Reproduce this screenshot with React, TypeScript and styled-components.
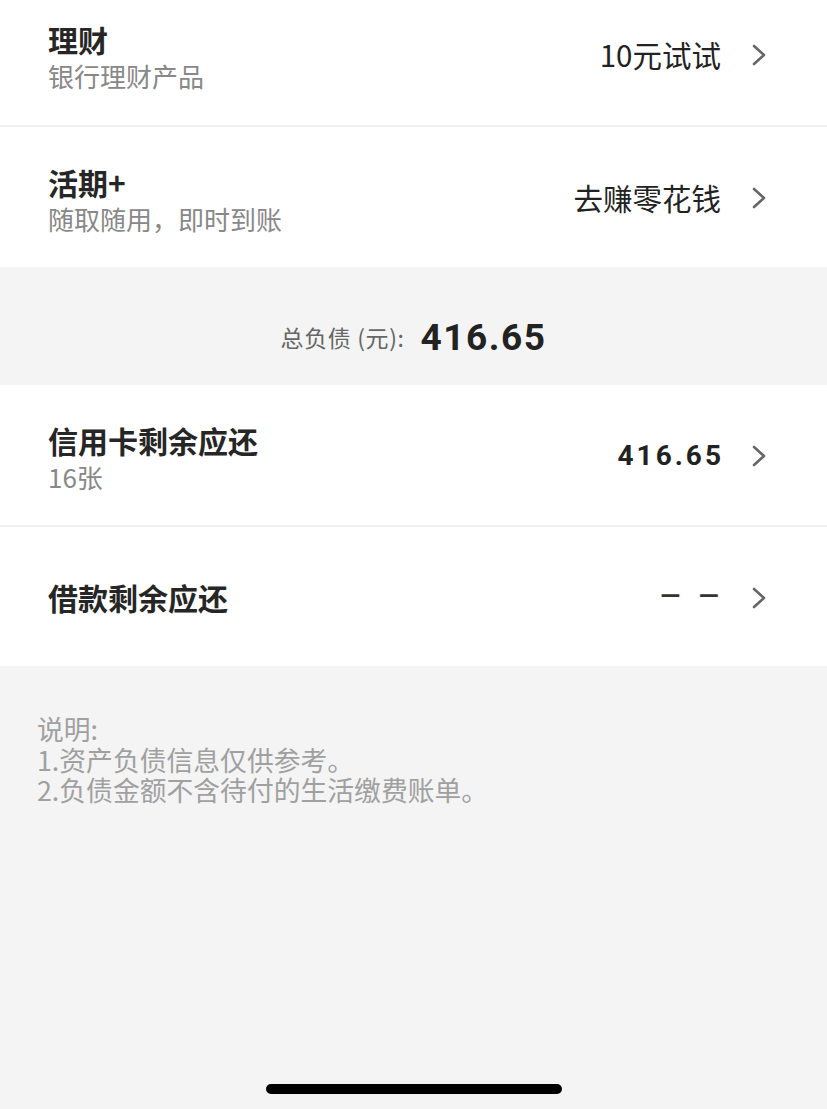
import React from "react";
import styled, { createGlobalStyle } from "styled-components";

const GlobalStyle = createGlobalStyle`
  html, body {
    margin: 0;
    padding: 0;
    background: #f4f4f4;
  }
  body {
    font-family: "Noto Sans CJK SC", "Noto Sans", sans-serif;
    color: #222;
  }
`;

type ValueKind = "text" | "number" | "dash";

interface IEntry {
  title: string;
  sub?: string;
  value: string;
  kind?: ValueKind;
}

const assets: IEntry[] = [
  { title: "理财", sub: "银行理财产品", value: "10元试试" },
  { title: "活期+", sub: "随取随用，即时到账", value: "去赚零花钱" },
];

const debts: IEntry[] = [
  { title: "信用卡剩余应还", sub: "16张", value: "416.65", kind: "number" },
  { title: "借款剩余应还", value: "– –", kind: "dash" },
];

const Chevron: React.FC = () => (
  <ChevronSvg viewBox="0 0 14 22" width="14" height="22">
    <path d="M2 2 L12 11 L2 20" fill="none" stroke="#666" strokeWidth="2.6" strokeLinecap="round" strokeLinejoin="round" />
  </ChevronSvg>
);

const EntryRow: React.FC<IEntry & { height?: number; lift?: number; divider?: boolean }> = ({
  title,
  sub,
  value,
  kind = "text",
  height = 140,
  lift = 0,
  divider,
}) => {
  return (
    <Row $height={height} $lift={lift} $divider={divider}>
      <TextBlock $stacked={!!sub}>
        <Title>{title}</Title>
        {sub && <Sub>{sub}</Sub>}
      </TextBlock>
      <Action>
        <Value $kind={kind}>{value}</Value>
        <Chevron />
      </Action>
    </Row>
  );
};

export default function App() {
  return (
    <Page>
      <GlobalStyle />
      <Card>
        <EntryRow {...assets[0]} height={127} lift={18} divider />
        <EntryRow {...assets[1]} />
      </Card>

      <Total>
        <TotalLabel>总负债 (元):</TotalLabel>
        <TotalAmount>416.65</TotalAmount>
      </Total>

      <Card>
        <EntryRow {...debts[0]} height={142} divider />
        <EntryRow {...debts[1]} height={139} />
      </Card>

      <Notes>
        <p>说明:</p>
        <p>1.资产负债信息仅供参考。</p>
        <p>2.负债金额不含待付的生活缴费账单。</p>
      </Notes>

      <HomeBar />
    </Page>
  );
}

const Page = styled.div`
  width: 827px;
  min-height: 1109px;
  display: flex;
  flex-direction: column;
  background: #f4f4f4;
`;

const Card = styled.section`
  background: #fff;
  display: flex;
  flex-direction: column;
`;

const Row = styled.div<{ $height: number; $lift: number; $divider?: boolean }>`
  height: ${(p) => p.$height}px;
  box-sizing: border-box;
  display: flex;
  align-items: center;
  justify-content: space-between;
  padding: 0 61px ${(p) => p.$lift}px 48px;
  border-bottom: ${(p) => (p.$divider ? "2px solid #f1f1f1" : "none")};
`;

const TextBlock = styled.div<{ $stacked: boolean }>`
  display: flex;
  flex-direction: column;
  margin-top: ${(p) => (p.$stacked ? "8px" : "0")};
`;

const Title = styled.div`
  font-size: 30px;
  line-height: 36px;
  font-weight: 700;
  color: #262626;
`;

const Sub = styled.div`
  font-size: 26px;
  line-height: 38px;
  color: #888;
`;

const Action = styled.div`
  display: flex;
  align-items: center;
  gap: 31px;
`;

const valueFont: Record<ValueKind, string> = {
  text: `
    font-size: 29.5px;
    font-weight: 400;
  `,
  number: `
    font-family: Roboto, "Noto Sans", sans-serif;
    font-size: 28px;
    font-weight: 700;
    letter-spacing: 3px;
    margin-right: -3px;
  `,
  dash: `
    font-family: Roboto, "Noto Sans", sans-serif;
    font-size: 36px;
    font-weight: 400;
    word-spacing: 6px;
    color: #333;
  `,
};

const Value = styled.span<{ $kind: ValueKind }>`
  color: #222;
  ${(p) => valueFont[p.$kind]}
`;

const ChevronSvg = styled.svg`
  display: block;
  margin-top: 2px;
`;

const Total = styled.div`
  height: 118px;
  display: flex;
  align-items: center;
  justify-content: center;
  gap: 16px;
  padding-top: 22px;
  box-sizing: border-box;
`;

const TotalLabel = styled.span`
  font-size: 23px;
  letter-spacing: 0.6px;
  color: #666;
`;

const TotalAmount = styled.span`
  font-family: Roboto, "Noto Sans", sans-serif;
  font-size: 37px;
  font-weight: 700;
  letter-spacing: 1.5px;
  color: #222;
`;

const Notes = styled.div`
  padding: 48px 37px 0;
  color: #a0a0a0;
  font-size: 26.8px;
  line-height: 30.5px;

  p {
    margin: 0;
  }
`;

const HomeBar = styled.div`
  margin: auto auto 15px;
  width: 296px;
  height: 10px;
  border-radius: 5px;
  background: #000;
`;
